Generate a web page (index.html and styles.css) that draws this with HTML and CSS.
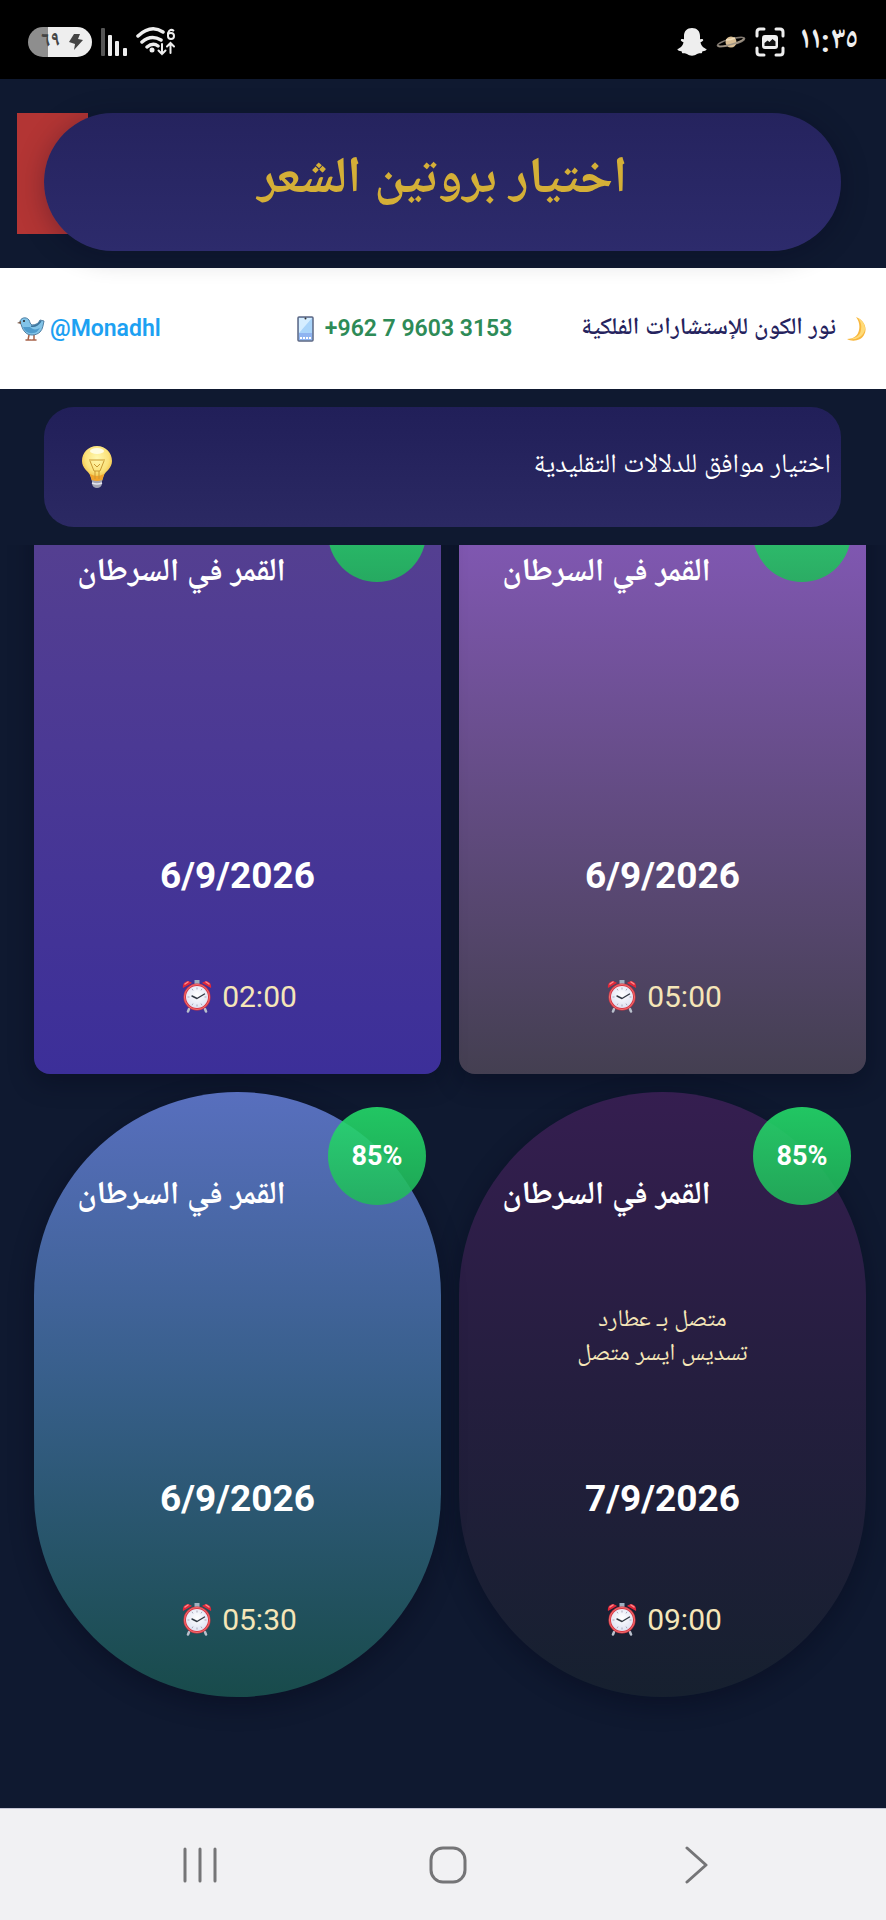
FILE: index.html
```html
<!DOCTYPE html>
<html lang="ar" dir="rtl">
<head>
    <meta charset="UTF-8">
    <meta name="viewport" content="width=device-width, initial-scale=1.0">
    <title>اختيار بروتين الشعر</title>
    <link rel="stylesheet" href="styles.css">
</head>
<body>
    <!-- Iconos compartidos -->
    <svg class="sprite" aria-hidden="true">
        <defs>
            <radialGradient id="face" cx="50%" cy="40%" r="60%">
                <stop offset="0" stop-color="#ffffff"/>
                <stop offset="1" stop-color="#dfe3f3"/>
            </radialGradient>
            <symbol id="clock" viewBox="0 0 30 33">
                <path d="M7 29l-1 2.500M23 29l1 2.500" stroke="#b9c0cc" stroke-width="2.500" stroke-linecap="round"/>
                <path d="M15 0v5" stroke="#9fb0c0" stroke-width="5"/>
                <path d="M1 8C0 3 5-1 10 3zM29 8C30 3 25-1 20 3z" fill="#e0283a"/>
                <path d="M3 4l3-2M27 4l-3-2" stroke="#ff8d8d" stroke-width="1.500" stroke-linecap="round"/>
                <circle cx="15" cy="17" r="13.500" fill="#d93340"/>
                <circle cx="15" cy="17" r="12.500" fill="none" stroke="#ef7272" stroke-width="1"/>
                <circle cx="15" cy="17" r="11" fill="url(#face)"/>
                <path d="M15 7.500v2M15 24.500v2M5.500 17h2M22.500 17h2M10 8.800l1 1.600M20 8.800l-1 1.600M10 25.200l1-1.600M20 25.200l-1-1.600" stroke="#aab" stroke-width="1"/>
                <path d="M10 16l5 2.500 7.500-4.500" fill="none" stroke="#333a44" stroke-width="1.400" stroke-linecap="round" stroke-linejoin="round"/>
            </symbol>
        </defs>
    </svg>

    <!-- Barra de estado -->
    <div class="status-bar">
        <div class="status-group">
            <span class="status-time">١١:٣٥</span>
            <svg width="30" height="30" viewBox="0 0 30 30" aria-hidden="true">
                <path d="M2 9V5q0-3 3-3h4M21 2h4q3 0 3 3v4M28 21v4q0 3-3 3h-4M9 28H5q-3 0-3-3v-4" fill="none" stroke="#eee" stroke-width="3" stroke-linecap="round"/>
                <rect x="7" y="8" width="16" height="14" rx="3" fill="#eee"/>
                <path d="M9.500 19v-3l3-2.500 2 1.500 3-3 3 2.500V19z" fill="#111"/>
            </svg>
            <svg width="30" height="14" viewBox="0 0 30 14" aria-hidden="true">
                <ellipse cx="15" cy="7" rx="14" ry="3" fill="none" stroke="#807870" stroke-width="1.500" transform="rotate(-15 15 7)"/>
                <circle cx="15" cy="7" r="5.500" fill="#d9bd93"/>
                <path d="M10 5q5 0 9-2" stroke="#f1dfbd" stroke-width="1.500" fill="none"/>
                <path d="M2 10.500q2 2 13-1T28 3.500" fill="none" stroke="#a09484" stroke-width="1.500"/>
            </svg>
            <svg width="30" height="30" viewBox="0 0 30 30" aria-hidden="true">
                <path d="M15 1c5 0 8 3 8 8v3c1 .6 2-.4 3 .4 1 1-1 2-2.500 2.800C24 19 27 21 29.500 22c.5 1-1.500 2-4 2.200-.5 1-.5 2-1 2-2 0-3-.2-4.500.8-3 2.200-7 2.200-10 0-1.500-1-2.500-.8-4.500-.8-.5 0-.5-1-1-2C2 24 0 23 .5 22 3 21 6 19 6.500 15.200 5 14.400 3 13.400 4 12.400c1-.8 2 .2 3-.4V9c0-5 3-8 8-8z" fill="#eee"/>
            </svg>
        </div>
        <div class="status-group">
            <svg width="40" height="30" viewBox="0 0 40 30" aria-hidden="true">
                <path d="M2 9Q15-3 27 5M6 15q9-8 19-2M11 20q6-5 11-1" fill="none" stroke="#eee" stroke-width="3.500" stroke-linecap="round"/>
                <circle cx="16" cy="23" r="2.500" fill="#eee"/>
                <path d="M38 4q-4-3-6 2v3q0 3 3 3t3-3-3-3-3 2" fill="none" stroke="#eee" stroke-width="2"/>
                <path d="M26 17v10m-3.500-3.500L26 27l3.500-3.500M34.500 26V16m-3.500 3.500l3.500-3.500 3.500 3.500" fill="none" stroke="#eee" stroke-width="2" stroke-linecap="round"/>
            </svg>
            <svg width="26" height="28" viewBox="0 0 26 28" aria-hidden="true">
                <rect width="4" height="28" rx="1" fill="#555"/>
                <rect x="7" y="7" width="4" height="21" rx="1" fill="#eee"/>
                <rect x="14" y="13" width="4" height="15" rx="1" fill="#eee"/>
                <rect x="22" y="20" width="4" height="8" rx="1" fill="#eee"/>
            </svg>
            <span class="battery" dir="ltr">
                <span>٦٩</span>
                <svg width="14" height="16" viewBox="0 0 14 16" aria-hidden="true">
                    <path d="M5 0h6L9 5l5 1-9 10 1-6-6-2z" fill="#444"/>
                </svg>
            </span>
        </div>
    </div>

    <!-- Encabezado -->
    <header class="header">
        <button class="back" type="button" aria-label="رجوع"></button>
        <h1 class="title">اختيار بروتين الشعر</h1>
    </header>

    <!-- Datos de contacto -->
    <div class="contact">
        <span class="contact-item brand">
            <svg width="20" height="26" viewBox="0 0 20 26" aria-hidden="true">
                <path d="M10 1c8 3 12 11 8 18-3 6-12 7-17 4 6 0 11-3 12-9 1-5 0-9-3-13z" fill="#f8b73e"/>
                <path d="M12 2c7 4 9 11 5 16-3 4-8 6-13 5 6-1 11-4 11-10 1-5-1-8-3-11z" fill="#ffdb78"/>
            </svg>
            نور الكون للإستشارات الفلكية
        </span>
        <a class="contact-item phone" href="tel:+962796033153" dir="ltr">
            <svg width="17" height="26" viewBox="0 0 17 26" aria-hidden="true">
                <rect x="1" y="1" width="15" height="24" rx="1" fill="#a9d4fa" stroke="#5c6784" stroke-width="1.500"/>
                <path d="M2 2h13L2 17z" fill="#d5edff"/>
                <path d="M2 17h13v7H2z" fill="#8fb4f1"/>
                <path d="M3 22h2m1 0h2m1 0h2m1 0h2" stroke="#fff" stroke-width="2"/>
                <circle cx="8.500" cy="2.500" r="1" fill="#333"/>
            </svg>
            +962 7 9603 3153
        </a>
        <a class="contact-item twitter" href="#" dir="ltr">
            <svg width="28" height="26" viewBox="0 0 28 26" aria-hidden="true">
                <path d="M12 19l-1 5m-2 0h5M17 19v5m-2 0h4" stroke="#a8634a" stroke-width="1.500" stroke-linecap="round"/>
                <path d="M3 6C3 2 9 0 12 4c1 2 1 4 3 5 4 0 7-2 8-5l4 1c-1 4-1 8-4 11-4 4-12 4-15 0-3-3-3-6-5-10z" fill="#82c4e8" stroke="#507fa3" stroke-width="1"/>
                <path d="M6 11c2 5 6 7 10 6 3 0 5-2 7-5-4 2-7 2-10-1z" fill="#4f9bcc"/>
                <path d="M14 10c4 1 7-1 10-5" fill="none" stroke="#3c749c" stroke-width="1.500"/>
                <path d="M0 7l4-2v3z" fill="#7b5c4b"/>
                <circle cx="7" cy="5" r="1" fill="#222"/>
            </svg>
            @Monadhl
        </a>
    </div>

    <!-- Aviso -->
    <div class="tip">
        <p>اختيار موافق للدلالات التقليدية</p>
        <svg width="32" height="44" viewBox="0 0 32 44" aria-hidden="true">
            <defs>
                <radialGradient id="bulb" cx="50%" cy="35%" r="65%">
                    <stop offset="0" stop-color="#fff8b0"/>
                    <stop offset="0.600" stop-color="#fbe27a"/>
                    <stop offset="1" stop-color="#eeb02e"/>
                </radialGradient>
            </defs>
            <path d="M16 1C7 1 1 8 1 16c0 7 6 10 8 14l2 6h10l2-6c2-4 8-7 8-14C31 8 25 1 16 1z" fill="url(#bulb)"/>
            <path d="M9 29q7 4 14 0l-2 7q-5 2-10 0z" fill="#f2a32b"/>
            <path d="M8 15h16M9 16l4 10h6l4-10M13 19l3 3 3-3M14 26v8M18 26v8" fill="none" stroke="#c99a35" stroke-width="1"/>
            <path d="M11 35q5 2 10 0v4q-1 4-5 4t-5-4z" fill="#a3a4b3"/>
            <path d="M11 38q5 2 10 0" fill="none" stroke="#e6e6ee" stroke-width="1.500"/>
            <ellipse cx="16" cy="6" rx="7" ry="3" fill="#fffce0"/>
        </svg>
    </div>

    <!-- Lista de fechas -->
    <main class="list">
        <div class="cards">
            <article class="card square purple">
                <span class="badge"></span>
                <h2>القمر في السرطان</h2>
                <p class="aspect"></p>
                <p class="date">6/9/2026</p>
                <p class="time" dir="ltr"><svg class="clock" aria-hidden="true"><use href="#clock"/></svg>05:00</p>
            </article>
            <article class="card square indigo">
                <span class="badge"></span>
                <h2>القمر في السرطان</h2>
                <p class="aspect"></p>
                <p class="date">6/9/2026</p>
                <p class="time" dir="ltr"><svg class="clock" aria-hidden="true"><use href="#clock"/></svg>02:00</p>
            </article>
            <article class="card night">
                <span class="badge">85%</span>
                <h2>القمر في السرطان</h2>
                <p class="aspect">متصل بـ عطارد<br>تسديس ايسر متصل</p>
                <p class="date">7/9/2026</p>
                <p class="time" dir="ltr"><svg class="clock" aria-hidden="true"><use href="#clock"/></svg>09:00</p>
            </article>
            <article class="card dawn">
                <span class="badge">85%</span>
                <h2>القمر في السرطان</h2>
                <p class="aspect"></p>
                <p class="date">6/9/2026</p>
                <p class="time" dir="ltr"><svg class="clock" aria-hidden="true"><use href="#clock"/></svg>05:30</p>
            </article>
        </div>
    </main>

    <!-- Barra de navegación -->
    <nav class="nav-bar" dir="ltr">
        <button type="button" aria-label="التطبيقات الأخيرة">
            <svg width="36" height="40" viewBox="0 0 36 40"><path d="M3 4v32M18 4v32M33 4v32" stroke="#757577" stroke-width="3" stroke-linecap="round"/></svg>
        </button>
        <button type="button" aria-label="الرئيسية">
            <svg width="40" height="40" viewBox="0 0 40 40"><rect x="3" y="3" width="34" height="34" rx="12" fill="none" stroke="#757577" stroke-width="3"/></svg>
        </button>
        <button type="button" aria-label="رجوع">
            <svg width="24" height="40" viewBox="0 0 24 40"><path d="M3 3l19 17L3 37" fill="none" stroke="#757577" stroke-width="3" stroke-linecap="round" stroke-linejoin="round"/></svg>
        </button>
    </nav>
</body>
</html>
```
FILE: styles.css
```css
* {
    box-sizing: border-box;
}

body {
    margin: 0;
    height: 100vh;
    display: flex;
    flex-direction: column;
    background-color: #0f1930;
    color: #fff;
    font-family: Roboto, "Noto Naskh Arabic UI", "Noto Naskh Arabic", "Noto Sans Arabic", "DejaVu Sans", sans-serif;
}

h1, h2, p {
    margin: 0;
}

button {
    border: 0;
    padding: 0;
    background: none;
}

.sprite {
    position: absolute;
    width: 0;
    height: 0;
}

/* Barra de estado */
.status-bar {
    flex: none;
    height: 79px;
    padding: 5px 28px 0;
    display: flex;
    align-items: center;
    justify-content: space-between;
    background-color: #000;
}

.status-group {
    display: flex;
    align-items: center;
    gap: 9px;
}

.status-time {
    margin-left: 6px;
    font-size: 31px;
    font-weight: bold;
    line-height: 36px;
    color: #eee;
}

.battery {
    display: flex;
    align-items: center;
    justify-content: space-between;
    width: 64px;
    height: 30px;
    padding: 0 9px 0 13px;
    border-radius: 15px;
    background: linear-gradient(to right, #8e8e8e 20px, #eee 20px);
    color: #444;
    font-size: 21px;
    font-weight: bold;
    line-height: 30px;
}

/* Encabezado */
.header {
    flex: none;
    position: relative;
    padding: 34px 45px 17px 44px;
}

.back {
    position: absolute;
    top: 34px;
    left: 17px;
    width: 71px;
    height: 121px;
    background-color: #b33534;
}

.title {
    position: relative;
    padding: 34px 20px;
    border-radius: 69px;
    background: linear-gradient(#25235e, #2d2b6c);
    box-shadow: 0 4px 28px rgba(8, 8, 30, 0.3);
    color: #d4af37;
    font-size: 51px;
    line-height: 70px;
    text-align: center;
}

/* Contacto */
.contact {
    flex: none;
    display: flex;
    align-items: center;
    height: 121px;
    padding: 0 20px 0 17px;
    background-color: #fff;
}

.contact-item {
    flex: 1 1 auto;
    display: flex;
    align-items: center;
    gap: 8px;
    font-size: 23px;
    font-weight: 600;
    line-height: 30px;
    white-space: nowrap;
    text-decoration: none;
}

.brand {
    gap: 10px;
    color: #25235e;
    font-size: 24px;
}

.phone {
    justify-content: flex-end;
    gap: 11px;
    color: #2e8b57;
}

.twitter {
    gap: 5px;
    color: #1da1f2;
}

/* Aviso */
.tip {
    flex: none;
    display: flex;
    align-items: center;
    justify-content: space-between;
    height: 120px;
    margin: 18px 45px 18px 44px;
    padding: 0 10px 0 37px;
    border-radius: 30px;
    background: linear-gradient(#211f59, #2b2963);
    font-size: 27px;
    line-height: 36px;
}

/* Lista desplazada hasta el final */
.list {
    flex: 1;
    min-height: 0;
    display: flex;
    flex-direction: column;
    justify-content: flex-end;
    overflow: hidden;
    padding: 0 20px 111px 34px;
}

.cards {
    flex: none;
    display: grid;
    grid-template-columns: 1fr 1fr;
    gap: 18px;
}

.card {
    position: relative;
    display: grid;
    grid-template-rows: 90px 192px 128px 114px;
    align-items: center;
    padding: 60px 0 21px;
    border-radius: 204px;
    box-shadow: 0 8px 24px rgba(5, 8, 25, 0.4);
    text-align: center;
}

.square {
    border-radius: 16px;
}

.purple {
    background: linear-gradient(#875abd, #7f57b0 13%, #443f51);
}

.indigo {
    background: linear-gradient(#58418f, #543f91 13%, #3c2f99);
}

.night {
    background: linear-gradient(#351e50, #241e3e 50%, #16202f);
}

.dawn {
    background: linear-gradient(#586fbe, #365e88 50%, #184b4b);
}

.card h2 {
    margin-right: 112px;
    font-size: 32px;
    line-height: 42px;
}

.badge {
    position: absolute;
    top: 15px;
    right: 15px;
    width: 98px;
    height: 98px;
    border-radius: 50%;
    background: linear-gradient(rgba(36, 222, 106, 0.88), rgba(32, 184, 90, 0.88));
    font-size: 27px;
    font-weight: bold;
    line-height: 98px;
}

.aspect {
    color: #f5e6b8;
    font-size: 24px;
    line-height: 34px;
}

.date {
    font-size: 37px;
    font-weight: bold;
}

.time {
    display: flex;
    align-items: center;
    justify-content: center;
    gap: 10px;
    padding-left: 4px;
    color: #f5e6b8;
    font-size: 30px;
}

.clock {
    width: 30px;
    height: 33px;
}

/* Navegación */
.nav-bar {
    flex: none;
    display: grid;
    grid-template-columns: repeat(3, 1fr);
    height: 112px;
    padding: 4px 66px 0 76px;
    border-top: 1px solid #c4c5d4;
    background-color: #f1f1f3;
}
```
